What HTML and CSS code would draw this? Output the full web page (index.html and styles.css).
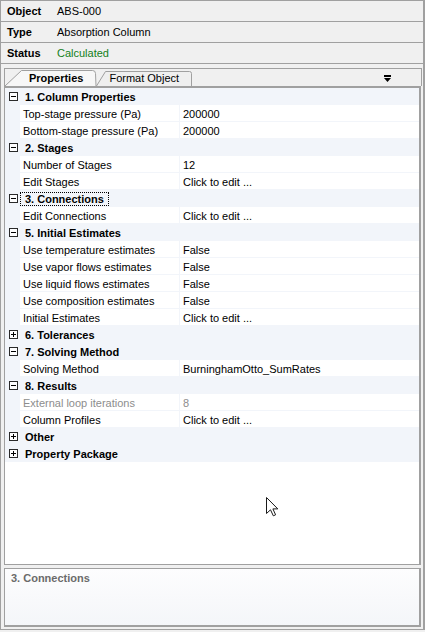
FILE: index.html
```html
<!DOCTYPE html>
<html>
<head>
<meta charset="utf-8">
<link rel="stylesheet" href="styles.css">
</head>
<body>
<div class="app">
  <div class="hrow"><span class="hlabel">Object</span><span class="hval">ABS-000</span></div>
  <div class="hrow"><span class="hlabel">Type</span><span class="hval">Absorption Column</span></div>
  <div class="hrow"><span class="hlabel">Status</span><span class="hval ok">Calculated</span></div>

  <div class="tabstrip">
    <svg class="tabshapes" width="416" height="17" viewBox="0 0 416 17">
      <path d="M91.5 17 L100.5 2.5 L184.5 2.5 Q186.5 2.5 186.5 4.5 L186.5 17" fill="#efefef" stroke="#a0a0a0"/>
      <path d="M0 17 L16.5 1.5 L87.5 1.5 Q90.5 1.5 90.5 4.5 L91 17" fill="#f7f7f7" stroke="#a0a0a0"/>
    </svg>
    <span class="tab active">Properties</span>
    <span class="tab">Format Object</span>
    <svg class="dropicon" width="7" height="7" viewBox="0 0 7 7">
      <rect x="0" y="0" width="7" height="2" fill="#000"/>
      <path d="M0 3 L7 3 L3.5 7 Z" fill="#000"/>
    </svg>
  </div>

  <div class="grid">
    <div class="row cat"><span class="tog minus"></span><span class="clabel">1. Column Properties</span></div>
    <div class="row prop"><span class="pl">Top-stage pressure (Pa)</span><span class="pv">200000</span></div>
    <div class="row prop"><span class="pl">Bottom-stage pressure (Pa)</span><span class="pv">200000</span></div>
    <div class="row cat"><span class="tog minus"></span><span class="clabel">2. Stages</span></div>
    <div class="row prop"><span class="pl">Number of Stages</span><span class="pv">12</span></div>
    <div class="row prop"><span class="pl">Edit Stages</span><span class="pv">Click to edit ...</span></div>
    <div class="row cat"><span class="tog minus"></span><span class="clabel focus">3. Connections</span></div>
    <div class="row prop"><span class="pl">Edit Connections</span><span class="pv">Click to edit ...</span></div>
    <div class="row cat"><span class="tog minus"></span><span class="clabel">5. Initial Estimates</span></div>
    <div class="row prop"><span class="pl">Use temperature estimates</span><span class="pv">False</span></div>
    <div class="row prop"><span class="pl">Use vapor flows estimates</span><span class="pv">False</span></div>
    <div class="row prop"><span class="pl">Use liquid flows estimates</span><span class="pv">False</span></div>
    <div class="row prop"><span class="pl">Use composition estimates</span><span class="pv">False</span></div>
    <div class="row prop"><span class="pl">Initial Estimates</span><span class="pv">Click to edit ...</span></div>
    <div class="row cat"><span class="tog plus"></span><span class="clabel">6. Tolerances</span></div>
    <div class="row cat"><span class="tog minus"></span><span class="clabel">7. Solving Method</span></div>
    <div class="row prop"><span class="pl">Solving Method</span><span class="pv">BurninghamOtto_SumRates</span></div>
    <div class="row cat"><span class="tog minus"></span><span class="clabel">8. Results</span></div>
    <div class="row prop ro"><span class="pl">External loop iterations</span><span class="pv">8</span></div>
    <div class="row prop"><span class="pl">Column Profiles</span><span class="pv">Click to edit ...</span></div>
    <div class="row cat"><span class="tog plus"></span><span class="clabel">Other</span></div>
    <div class="row cat"><span class="tog plus"></span><span class="clabel">Property Package</span></div>

    <svg class="cursor" width="13" height="20" viewBox="0 0 13 20">
      <path d="M0.5 0.5 L0.5 16.5 L4.5 12.8 L7.3 18.8 L9.6 17.8 L6.9 11.9 L11.8 11.9 Z" fill="#fff" stroke="#1a1a1a" stroke-linejoin="round"/>
    </svg>
  </div>

  <div class="desc">
    <div class="dtitle">3. Connections</div>
  </div>
</div>
</body>
</html>
```

FILE: styles.css
```css
html, body {
  margin: 0;
  padding: 0;
  background: #f0f0f0;
}

body {
  font-family: "Liberation Sans", Arial, sans-serif;
  font-size: 11px;
  color: #000;
}

.app {
  width: 425px;
  height: 630px;
  box-sizing: border-box;
  border: 1px solid #a0a0a0;
  border-right-width: 2px;
  display: flex;
  flex-direction: column;
  background: #f0f0f0;
}

.hrow {
  height: 20px;
  flex: 0 0 20px;
  border-bottom: 1px solid #a0a0a0;
  display: flex;
  align-items: center;
  padding-left: 6px;
}

.hlabel {
  font-weight: bold;
  width: 50px;
}

.hval.ok {
  color: #13801a;
}

.tabstrip {
  margin: 4px 1px 0 3px;
  height: 17px;
  flex: 0 0 17px;
  border: 1px solid #a0a0a0;
  border-bottom: none;
  background: #f0f0f0;
  display: flex;
  align-items: center;
  position: relative;
}

.tabshapes {
  position: absolute;
  left: 0;
  top: 0;
}

.tab {
  position: relative;
  line-height: 13px;
  padding-top: 2px;
}

.tab.active {
  font-weight: bold;
  margin-left: 24px;
}

.tab + .tab {
  margin-left: 26px;
}

.dropicon {
  margin-left: auto;
  margin-right: 30px;
  margin-top: 1px;
}

.grid {
  margin: 0 2px 0 3px;
  flex: 1 1 auto;
  border: 1px solid #a0a0a0;
  border-top-width: 2px;
  border-right-width: 2px;
  background: #fff;
  position: relative;
  overflow: hidden;
}

.row {
  height: 17px;
  display: flex;
  align-items: center;
  background: #f2f5fa;
}

.tog {
  width: 9px;
  height: 9px;
  box-sizing: border-box;
  border: 1px solid #2a2a2a;
  margin-left: 4px;
  margin-right: 2px;
  position: relative;
  background: #fdfdfe;
}

.tog::before {
  content: "";
  position: absolute;
  left: 1px;
  top: 3px;
  width: 5px;
  height: 1px;
  background: #000;
}

.tog.plus::after {
  content: "";
  position: absolute;
  left: 3px;
  top: 1px;
  width: 1px;
  height: 5px;
  background: #000;
}

.clabel {
  font-weight: bold;
  line-height: 12px;
  padding: 0 4px;
  border: 1px dotted transparent;
}

.clabel.focus {
  border-color: #000;
}

.prop {
  align-items: flex-start;
  padding-left: 15px;
}

.pl, .pv {
  height: 16px;
  line-height: 18px;
  background: #fff;
  padding-left: 3px;
  box-sizing: border-box;
  white-space: nowrap;
  overflow: hidden;
}

.pl {
  width: 159px;
  margin-right: 1px;
}

.pv {
  flex: 1 1 auto;
}

.ro .pl, .ro .pv {
  color: #8d8d8d;
}

.cursor {
  position: absolute;
  left: 261px;
  top: 409px;
}

.desc {
  margin: 3px 2px 2px 3px;
  height: 52px;
  flex: 0 0 52px;
  border: 1px solid #a0a0a0;
  border-right-width: 2px;
  border-bottom-width: 2px;
  background: linear-gradient(#fdfdfe, #f4f6f9);
  padding: 2px 6px;
  box-sizing: content-box;
}

.dtitle {
  font-weight: bold;
  color: #6b6b6b;
  line-height: 14px;
}
```
